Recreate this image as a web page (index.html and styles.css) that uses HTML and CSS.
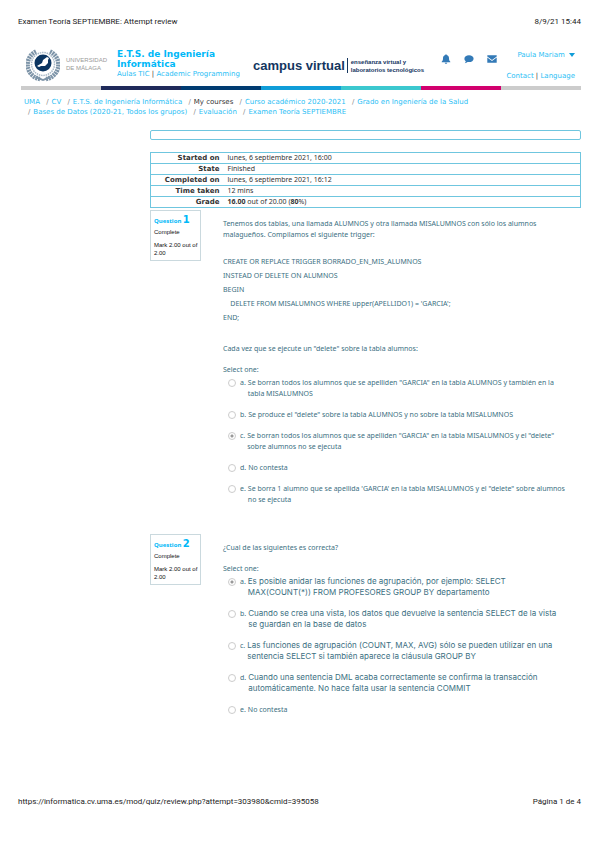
FILE: index.html
```html
<!DOCTYPE html>
<html lang="es">
<head>
  <meta charset="UTF-8" />
  <meta name="viewport" content="width=device-width, initial-scale=1" />
  <title>Examen Teoría SEPTIEMBRE: Attempt review</title>
  <link rel="stylesheet" href="styles.css">
</head>
<body>
  <div class="print-line">
    <span>Examen Teoría SEPTIEMBRE: Attempt review</span>
    <span>8/9/21 15:44</span>
  </div>

  <div class="page">
    <header class="banner">
      <svg class="seal" viewBox="0 0 34 34" aria-hidden="true">
        <path d="M10 3.500A14.500 14.500 0 0 0 14 31M24 3.500A14.500 14.500 0 0 1 20 31" fill="none" stroke="#7d94a8" stroke-width="4.500" stroke-dasharray="2 .7"/>
        <circle cx="17" cy="16" r="11.500" fill="#fff" stroke="#a9b9c7" stroke-width="1.500" stroke-dasharray="1.500 .8"/>
        <circle cx="17" cy="15" r="8.500" fill="#0b3561"/>
        <path d="M11 18l5-3 1-3 4-3 2 1-1 2v3l-3 3h-4l-2 1z" fill="#fff"/>
        <path d="M10 28l7 3 7-3 1 2-8 3-8-3z" fill="#7d94a8"/>
      </svg>
      <div class="uni">UNIVERSIDAD<br>DE MÁLAGA</div>
      <div class="school">
        <h1>E.T.S. de Ingeniería Informática</h1>
        <p><a href="#">Aulas TIC</a> | <a href="#">Academic Programming</a></p>
      </div>
      <div class="campus">
        <strong>campus virtual</strong>
        <span>enseñanza virtual y<br>laboratorios tecnológicos</span>
      </div>
      <div class="icons">
        <button type="button" aria-label="Notifications">
          <svg viewBox="0 0 10 10"><path d="M5 0.3c.5 0 .7.3.7.8 1.6.4 2.3 1.6 2.3 3.2 0 2 .5 2.700 1.300 3.400v.6H.7v-.6C1.500 7 2 6.300 2 4.300c0-1.600.7-2.800 2.300-3.200 0-.5.2-.8.7-.8zM3.800 8.700h2.400c0 .7-.5 1.100-1.200 1.100s-1.200-.4-1.200-1.100z" fill="#337ab7"/></svg>
        </button>
        <button type="button" aria-label="Messages">
          <svg viewBox="0 0 10 10"><path d="M5 1.300c2.600 0 4.600 1.500 4.600 3.400S7.600 8.100 5 8.100c-.5 0-1 0-1.400-.1C2.800 8.700 1.800 9.100.8 9.200c.5-.5.900-1.200 1-1.900C1 6.600.4 5.700.4 4.700.4 2.800 2.400 1.300 5 1.300z" fill="#337ab7"/></svg>
        </button>
        <button type="button" aria-label="Mail">
          <svg viewBox="0 0 10 10"><path d="M.3 1.300h9.400v1.100L5 6 .3 2.400zM.3 3.500L5 7.100l4.700-3.600v5.200H.3z" fill="#337ab7"/></svg>
        </button>
      </div>
      <div class="account">
        <a class="user" href="#">Paula Mariam <svg viewBox="0 0 6 4"><path d="M0 0h6L3 4z" fill="#109dd8"/></svg></a>
        <p><a href="#">Contact</a> | <a href="#">Language</a></p>
      </div>
    </header>

    <div class="stripe"><i></i><i></i><i></i><i></i><i></i><i></i><i></i></div>

    <ol class="breadcrumb">
      <li><a href="#">UMA</a></li>
      <li><a href="#">CV</a></li>
      <li><a href="#">E.T.S. de Ingeniería Informática</a></li>
      <li>My courses</li>
      <li><a href="#">Curso académico 2020-2021</a></li>
      <li><a href="#">Grado en Ingeniería de la Salud</a></li>
      <li><a href="#">Bases de Datos (2020-21, Todos los grupos)</a></li>
      <li><a href="#">Evaluación</a></li>
      <li><a href="#">Examen Teoría SEPTIEMBRE</a></li>
    </ol>

    <main class="content">
      <div class="notice"></div>

      <table class="summary">
        <tr><th scope="row">Started on</th><td>lunes, 6 septiembre 2021, 16:00</td></tr>
        <tr><th scope="row">State</th><td>Finished</td></tr>
        <tr><th scope="row">Completed on</th><td>lunes, 6 septiembre 2021, 16:12</td></tr>
        <tr><th scope="row">Time taken</th><td>12 mins</td></tr>
        <tr><th scope="row">Grade</th><td><b>16.00</b> out of 20.00 (<b>80</b>%)</td></tr>
      </table>

      <section class="question">
        <div class="info">
          <h2>Question <b>1</b></h2>
          <p>Complete</p>
          <p>Mark 2.00 out of 2.00</p>
        </div>
        <div class="formulation">
          <p>Tenemos dos tablas, una llamada ALUMNOS y otra llamada MISALUMNOS con sólo los alumnos malagueños. Compilamos el siguiente trigger:</p>
          <div class="code">CREATE OR REPLACE TRIGGER BORRADO_EN_MIS_ALUMNOS<br>
            INSTEAD OF DELETE ON ALUMNOS<br>
            BEGIN<br>
            &nbsp;&nbsp;&nbsp; DELETE FROM MISALUMNOS WHERE upper(APELLIDO1) = 'GARCIA';<br>
            END;</div>
          <p>Cada vez que se ejecute un "delete" sobre la tabla alumnos:</p>
          <fieldset class="answers">
            <legend>Select one:</legend>
            <div class="answer"><input type="radio" name="q1" id="q1a" disabled><label for="q1a"><span>a.</span> <span>Se borran todos los alumnos que se apelliden "GARCIA" en la tabla ALUMNOS y también en la tabla MISALUMNOS</span></label></div>
            <div class="answer"><input type="radio" name="q1" id="q1b" disabled><label for="q1b"><span>b.</span> <span>Se produce el "delete" sobre la tabla ALUMNOS y no sobre la tabla MISALUMNOS</span></label></div>
            <div class="answer"><input type="radio" name="q1" id="q1c" checked disabled><label for="q1c"><span>c.</span> <span>Se borran todos los alumnos que se apelliden "GARCIA" en la tabla MISALUMNOS y el "delete" sobre alumnos no se ejecuta</span></label></div>
            <div class="answer"><input type="radio" name="q1" id="q1d" disabled><label for="q1d"><span>d.</span> <span>No contesta</span></label></div>
            <div class="answer"><input type="radio" name="q1" id="q1e" disabled><label for="q1e"><span>e.</span> <span>Se borra 1 alumno que se apellida 'GARCIA' en la tabla MISALUMNOS y el "delete" sobre alumnos no se ejecuta</span></label></div>
          </fieldset>
        </div>
      </section>

      <section class="question">
        <div class="info">
          <h2>Question <b>2</b></h2>
          <p>Complete</p>
          <p>Mark 2.00 out of 2.00</p>
        </div>
        <div class="formulation">
          <p>¿Cual de las siguientes es correcta?</p>
          <fieldset class="answers">
            <legend>Select one:</legend>
            <div class="answer"><input type="radio" name="q2" id="q2a" checked disabled><label for="q2a"><span>a.</span> <span class="pasted">Es posible anidar las funciones de agrupación, por ejemplo: SELECT MAX(COUNT(*)) FROM PROFESORES GROUP BY departamento</span></label></div>
            <div class="answer"><input type="radio" name="q2" id="q2b" disabled><label for="q2b"><span>b.</span> <span class="pasted">Cuando se crea una vista, los datos que devuelve la sentencia SELECT de la vista se guardan en la base de datos</span></label></div>
            <div class="answer"><input type="radio" name="q2" id="q2c" disabled><label for="q2c"><span>c.</span> <span class="pasted">Las funciones de agrupación (COUNT, MAX, AVG) sólo se pueden utilizar en una sentencia SELECT si también aparece la cláusula GROUP BY</span></label></div>
            <div class="answer"><input type="radio" name="q2" id="q2d" disabled><label for="q2d"><span>d.</span> <span class="pasted">Cuando una sentencia DML acaba correctamente se confirma la transacción automáticamente. No hace falta usar la sentencia COMMIT</span></label></div>
            <div class="answer"><input type="radio" name="q2" id="q2e" disabled><label for="q2e"><span>e.</span> <span>No contesta</span></label></div>
          </fieldset>
        </div>
      </section>
    </main>
  </div>

  <footer class="print-line">
    <span>https://informatica.cv.uma.es/mod/quiz/review.php?attempt=303980&amp;cmid=395058</span>
    <span>Página 1 de 4</span>
  </footer>
</body>
</html>
```
FILE: styles.css
```css
* {
  box-sizing: border-box;
}

body {
  margin: 0;
  padding: 16px 18px 41px;
  min-height: 100vh;
  display: flex;
  flex-direction: column;
  background: #fff;
  color: #333;
  font-family: Verdana, "DejaVu Sans", sans-serif;
  font-size: 7px;
  line-height: 11px;
}

h1, h2, p, ol {
  margin: 0;
  padding: 0;
}

a {
  color: #2bc0f5;
  text-decoration: none;
}

.print-line {
  display: flex;
  justify-content: space-between;
  font-family: Roboto, sans-serif;
  font-size: 8px;
  color: #222;
}

.page {
  flex: 1;
  padding: 18px 0 0 3px;
}

.banner {
  display: flex;
  height: 41px;
}

.seal {
  width: 34px;
  height: 34px;
  margin: 3px 0 0 5px;
}

.uni {
  margin: 11px 0 0 6px;
  width: 51px;
  font-family: "Liberation Sans", sans-serif;
  font-size: 6px;
  line-height: 8px;
  color: #999;
}

.school {
  width: 132px;
}

.school h1 {
  width: 110px;
  padding-top: 4px;
  font-size: 9px;
  line-height: 10px;
  color: #00b8f8;
}

.school p {
  white-space: nowrap;
}

.campus {
  display: flex;
  gap: 3px;
  padding: 13px 0 0 4px;
  color: #14365f;
  font-family: "Liberation Sans", sans-serif;
}

.campus strong {
  height: 15px;
  padding-right: 2px;
  border-right: 1px solid #14365f;
  font-size: 13px;
  line-height: 15px;
  white-space: nowrap;
}

.campus span {
  font-size: 6px;
  font-weight: bold;
  line-height: 8px;
  white-space: nowrap;
}

.icons {
  display: flex;
  gap: 13px;
  margin: 9px 0 0 17px;
}

.icons button {
  width: 10px;
  height: 10px;
  padding: 0;
  border: 0;
  background: none;
}

.icons svg {
  display: block;
}

.account {
  margin-left: auto;
  padding: 5px 6px 0 0;
  text-align: right;
  white-space: nowrap;
}

.account p {
  margin-top: 10px;
}

.user {
  display: block;
}

.user svg {
  width: 6px;
  height: 4px;
  margin-left: 2px;
  vertical-align: middle;
}

.stripe {
  display: flex;
  height: 4px;
}

.stripe i {
  flex: 1;
  background: #ccc;
}

.stripe i:nth-child(2) { background: #1f2a5a; }
.stripe i:nth-child(3) { background: #003b71; }
.stripe i:nth-child(4) { background: #109dd8; }
.stripe i:nth-child(5) { background: #3cc8cf; }
.stripe i:nth-child(6) { background: #d2006e; }

.breadcrumb {
  list-style: none;
  padding: 7px 0 0 3px;
  line-height: 10px;
}

.breadcrumb li {
  display: inline-block;
}

.breadcrumb li + li::before {
  content: "/";
  padding: 0 3px 0 4px;
  color: #888;
}

.content {
  margin: 13px 0 0 129px;
}

.notice {
  height: 10px;
  margin-bottom: 12px;
  border: 1px solid #6fc6df;
  border-radius: 2px;
}

.summary {
  width: 100%;
  border-collapse: collapse;
  border: 1px solid #6fc6df;
}

.summary tr {
  border-top: 1px solid #6fc6df;
}

.summary th,
.summary td {
  padding: 0 4px;
  line-height: 10px;
  text-align: left;
}

.summary td {
  font-family: "Noto Sans", sans-serif;
}

.summary th {
  width: 73px;
  text-align: right;
  white-space: nowrap;
}

.question {
  display: grid;
  grid-template-columns: 51px 1fr;
  align-items: start;
  gap: 22px;
  margin: 2px 0 29px;
}

.info {
  height: 51px;
  padding: 3px 2px 3px 3px;
  border: 1px solid #cad9de;
  font-family: "Liberation Sans", sans-serif;
  font-size: 6px;
  line-height: 8px;
  color: #111;
}

.info h2 {
  margin-bottom: 1px;
  font-family: "Noto Sans", sans-serif;
  font-size: 6px;
  line-height: 11px;
  color: #00b8f8;
}

.info h2 b {
  font-family: Verdana, "DejaVu Sans", sans-serif;
  font-size: 10px;
}

.info p + p {
  margin-top: 5px;
}

.formulation {
  padding: 8px 15px 0 0;
  font-family: "Noto Sans", sans-serif;
  color: #3b6f82;
}

.code {
  margin: 15px 0 18px;
  line-height: 14px;
}

.answers {
  margin: 10px 0 0;
  padding: 0;
  border: 0;
}

.answers legend {
  padding: 0 0 2px;
}

.answer {
  display: flex;
  padding-left: 5px;
  margin-bottom: 10px;
}

.answer:last-child {
  margin-bottom: 0;
}

.answer input {
  appearance: none;
  flex: none;
  width: 8px;
  height: 8px;
  margin: 2px 4px 0 0;
  border: 1px solid #ccc;
  border-radius: 50%;
}

.answer input:checked {
  background: radial-gradient(#999 1px, #fff 2px);
}

.answer label {
  display: flex;
  gap: 2px;
}

.pasted {
  font-family: Inter, "Liberation Sans", sans-serif;
  font-size: 8px;
}
```
